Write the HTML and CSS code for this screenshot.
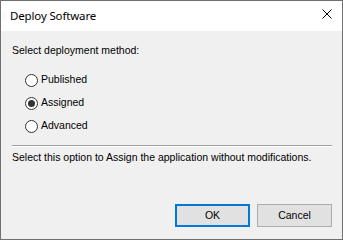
FILE: index.html
```html
<!DOCTYPE html>
<html>
<head>
<meta charset="utf-8">
<link rel="stylesheet" href="styles.css">
</head>
<body>
<div class="window">
  <div class="titlebar">
    <span class="title">Deploy Software</span>
    <svg class="close" width="10" height="10" viewBox="0 0 10 10"><path d="M0.5 0.5 L9.5 9.5 M9.5 0.5 L0.5 9.5" stroke="#000" stroke-width="1" fill="none"/></svg>
  </div>
  <div class="content">
    <div class="label">Select deployment method:</div>
    <div class="radios">
      <div class="row"><span class="radio"></span><span class="rtext">Published</span></div>
      <div class="row"><span class="radio checked"><span class="dot"></span></span><span class="rtext">Assigned</span></div>
      <div class="row"><span class="radio"></span><span class="rtext">Advanced</span></div>
    </div>
    <div class="sep"></div>
    <div class="desc">Select this option to Assign the application without modifications.</div>
    <div class="buttons">
      <div class="btn default">OK</div>
      <div class="btn">Cancel</div>
    </div>
  </div>
</div>
</body>
</html>
```
FILE: styles.css
```css
html, body { margin: 0; padding: 0; }
body { width: 343px; height: 240px; overflow: hidden; background: #f0f0f0; }
.window {
  width: 343px; height: 240px; box-sizing: border-box;
  border: 1px solid #707070;
  display: flex; flex-direction: column;
  background: #f0f0f0;
  font-family: "Liberation Sans", Arial, sans-serif;
  font-size: 10.5px; line-height: 13px; color: #000;
}
.titlebar {
  height: 30px; background: #ffffff;
  display: flex; justify-content: space-between; align-items: center;
  padding-left: 9px;
}
.title { font-family: "Segoe UI", "Noto Sans", sans-serif; font-size: 11.5px; letter-spacing: -0.15px; line-height: 16px; color: #000; }
.close { align-self: flex-start; margin-top: 8px; margin-right: 10px; }
.content {
  flex: 1; display: flex; flex-direction: column;
  padding: 13px 10px 12px 11px;
}
.radios { margin-top: 12px; display: flex; flex-direction: column; }
.row { height: 23px; display: flex; align-items: center; padding-left: 13px; gap: 3px; }
.rtext { padding-bottom: 2px; }
.radio {
  width: 13px; height: 13px; box-sizing: border-box;
  border: 1px solid #333333; border-radius: 50%; background: #ffffff;
  display: flex; align-items: center; justify-content: center;
}
.dot { width: 7px; height: 7px; border-radius: 50%; background: #333333; }
.sep { margin-top: 7px; height: 1px; background: #a0a0a0; border-bottom: 1px solid #ffffff; }
.desc { margin-top: 4px; }
.buttons { margin-top: auto; display: flex; justify-content: flex-end; gap: 7px; }
.btn {
  width: 75px; height: 23px; box-sizing: border-box;
  border: 1px solid #adadad; background: #e1e1e1;
  display: flex; align-items: center; justify-content: center;
}
.btn.default { border: 2px solid #0078d7; }
```
